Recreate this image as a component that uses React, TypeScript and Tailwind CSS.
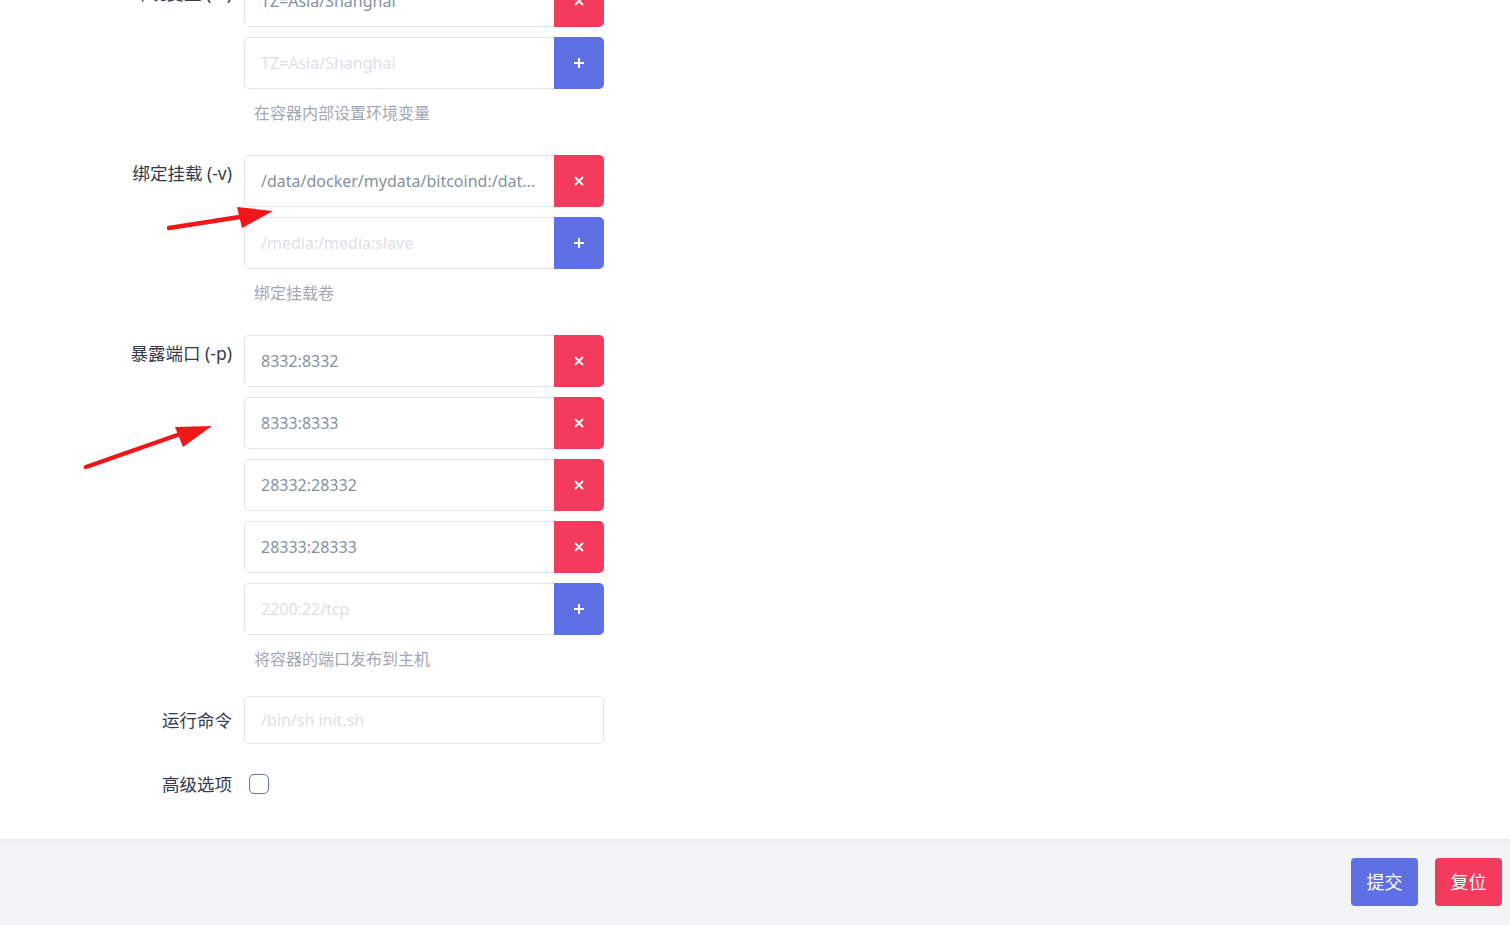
import React from 'react';

const font = { fontFamily: '"Noto Sans", "Noto Sans CJK SC", sans-serif' };

type Row = { value?: string; placeholder?: string; add?: boolean };

const GroupRow = ({ value, placeholder, add }: Row) => (
  <div className="flex h-[52px] w-[360px]">
    <div className="flex-1 flex items-center border border-[#e3e4e8] border-r-0 rounded-l-[5px] px-4 overflow-hidden">
      {value ? (
        <span className="text-[16px] text-[#8591a0] whitespace-nowrap truncate">{value}</span>
      ) : (
        <span className="text-[16px] text-[#dcdfe4] whitespace-nowrap">{placeholder}</span>
      )}
    </div>
    <button
      className={`w-[50px] flex items-center justify-center rounded-r-[5px] text-white ${
        add ? 'bg-[#5e70e3]' : 'bg-[#f43b5d]'
      }`}
    >
      {add ? (
        <svg width="12" height="12" viewBox="0 0 12 12">
          <path d="M6 1v10M1 6h10" stroke="white" strokeWidth="2" />
        </svg>
      ) : (
        <svg width="10" height="10" viewBox="0 0 10 10">
          <path d="M1 1l8 8M9 1l-8 8" stroke="white" strokeWidth="1.8" />
        </svg>
      )}
    </button>
  </div>
);

const Section = ({ label, rows, help }: { label: string; rows: Row[]; help: string }) => (
  <div className="flex">
    <div className="w-[232px] text-right text-[17.5px] leading-6 text-[#363a4c] pt-[6px] whitespace-nowrap">
      {label}
    </div>
    <div className="ml-3 flex flex-col">
      <div className="flex flex-col gap-[10px]">
        {rows.map((r, i) => (
          <GroupRow key={i} {...r} />
        ))}
      </div>
      <div className="mt-3 pl-[10px] text-[16px] leading-6 text-[#a3a7b2]">{help}</div>
    </div>
  </div>
);

export default function App() {
  return (
    <div className="relative min-h-[925px] bg-white overflow-hidden" style={font}>
      <div className="h-[864px] -mt-[25px]">
        <div className="flex flex-col gap-[30px]">
          <Section
            label="环境变量 (-e)"
            rows={[{ value: 'TZ=Asia/Shanghai' }, { placeholder: 'TZ=Asia/Shanghai', add: true }]}
            help="在容器内部设置环境变量"
          />
          <Section
            label="绑定挂载 (-v)"
            rows={[
              { value: '/data/docker/mydata/bitcoind:/data/bitcoin' },
              { placeholder: '/media:/media:slave', add: true },
            ]}
            help="绑定挂载卷"
          />
          <Section
            label="暴露端口 (-p)"
            rows={[
              { value: '8332:8332' },
              { value: '8333:8333' },
              { value: '28332:28332' },
              { value: '28333:28333' },
              { placeholder: '2200:22/tcp', add: true },
            ]}
            help="将容器的端口发布到主机"
          />
        </div>
        <div className="flex items-center mt-[25px]">
          <div className="w-[232px] text-right text-[17.5px] text-[#363a4c]">运行命令</div>
          <div className="ml-3 w-[360px] h-[48px] flex items-center border border-[#e3e4e8] rounded-[5px] px-4">
            <span className="text-[16px] text-[#dcdfe4]">/bin/sh init.sh</span>
          </div>
        </div>
        <div className="flex items-center mt-[27px]">
          <div className="w-[232px] text-right text-[17.5px] text-[#363a4c]">高级选项</div>
          <div className="ml-[17px] w-[20px] h-[20px] rounded-[5px] border-[1.5px] border-[#6b70b0] bg-white" />
        </div>
      </div>
      <div className="h-[86px] bg-[#f3f4f6] shadow-[inset_0_4px_6px_-4px_rgba(0,0,0,0.06)] flex items-center justify-end gap-[17px] pr-2">
        <button className="w-[67px] h-[48px] rounded-[4px] bg-[#5e70e3] text-white text-[18px]">提交</button>
        <button className="w-[67px] h-[48px] rounded-[4px] bg-[#f43b5d] text-white text-[18px]">复位</button>
      </div>
      <svg className="absolute left-0 top-0 pointer-events-none" width="300" height="500">
        <path d="M169 228 L246 216" stroke="#f0171b" strokeWidth="4.5" strokeLinecap="round" />
        <polygon points="237,207 273,211 242,228" fill="#f0171b" />
        <path d="M86 467 L186 432" stroke="#f0171b" strokeWidth="4.5" strokeLinecap="round" />
        <polygon points="175,427 212,426 183,447" fill="#f0171b" />
      </svg>
    </div>
  );
}
